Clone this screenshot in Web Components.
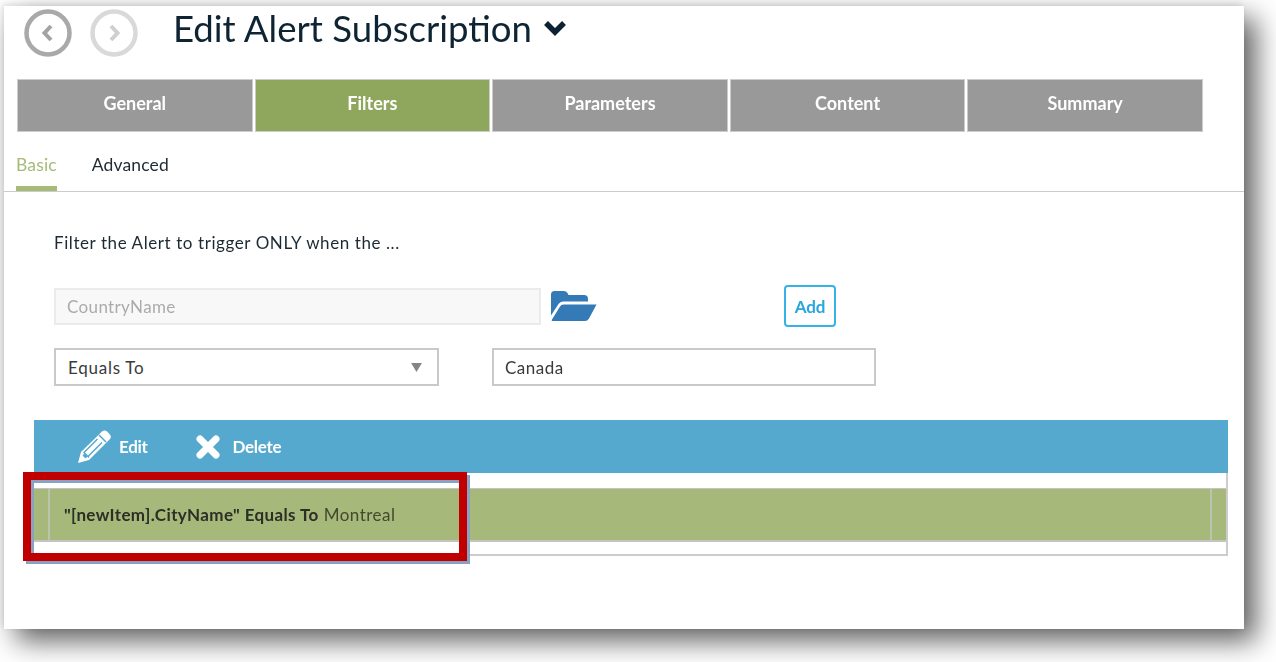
<!DOCTYPE html>
<html>
<head>
<meta charset="utf-8">
<title>Edit Alert Subscription</title>
<style>
html, body { margin: 0; height: 100%; background: #fff; overflow: hidden; }
body { padding: 6px 0 0 4px; box-sizing: border-box; font-family: "Lato", "Open Sans", sans-serif; color: #1d2a33; }
</style>
</head>
<body>
<alert-sheet>
    <alert-header title-text="Edit Alert Subscription"></alert-header>
    <step-tabs>
        <step-tab>General</step-tab>
        <step-tab active>Filters</step-tab>
        <step-tab>Parameters</step-tab>
        <step-tab>Content</step-tab>
        <step-tab>Summary</step-tab>
    </step-tabs>
    <sub-tabs></sub-tabs>
    <filter-form></filter-form>
    <filter-grid></filter-grid>
    <highlight-box></highlight-box>
</alert-sheet>

<script>
class AlertSheet extends HTMLElement {
    constructor() {
        super();
        this.attachShadow({ mode: 'open' }).innerHTML = `
<style>
:host {
    display: block;
    position: relative;
    width: 1240px;
    height: 623px;
    background: #fff;
    box-shadow: 12px 12px 26px rgba(0,0,0,.62), -2px -2px 6px rgba(0,0,0,.1);
}
</style>
<slot></slot>`;
    }
}

class AlertHeader extends HTMLElement {
    constructor() {
        super();
        this.attachShadow({ mode: 'open' }).innerHTML = `
<style>
:host { display: flex; align-items: center; height: 73px; box-sizing: border-box; padding: 0 0 19px 20px; filter: blur(.3px); }
.nav { width: 48px; height: 48px; flex: none; }
.nav + .nav { margin-left: 18px; }
h1 { margin: 0 0 10px 35px; font-size: 36.600px; font-weight: 400; color: #0f2433; white-space: nowrap; }
.chev { margin: 0 0 10px 11px; width: 24px; height: 16px; flex: none; }
</style>
<svg class="nav" viewBox="0 0 48 48"><circle cx="24" cy="24" r="21.500" fill="#fff" stroke="#a9a9a9" stroke-width="4.500"/><path d="M27 17l-6.500 7 6.500 7" fill="none" stroke="#a3a3a3" stroke-width="4"/></svg>
<svg class="nav" viewBox="0 0 48 48"><circle cx="24" cy="24" r="21.500" fill="#fff" stroke="#d9d9d9" stroke-width="4.500"/><path d="M21 17l6.500 7-6.500 7" fill="none" stroke="#cfcfcf" stroke-width="4"/></svg>
<h1></h1>
<svg class="chev" viewBox="0 0 24 16"><path d="M3 3l9 9 9-9" fill="none" stroke="#0c2233" stroke-width="5.500"/></svg>`;
        this.shadowRoot.querySelector('h1').textContent = this.getAttribute('title-text');
    }
}

class StepTabs extends HTMLElement {
    constructor() {
        super();
        this.attachShadow({ mode: 'open' }).innerHTML = `
<style>
:host { display: flex; gap: 2px; margin-left: 13px; width: 1186px; }
</style>
<slot></slot>`;
    }
}

class StepTab extends HTMLElement {
    constructor() {
        super();
        this.attachShadow({ mode: 'open' }).innerHTML = `
<style>
:host {
    flex: 1;
    display: flex;
    align-items: center;
    justify-content: center;
    height: 53px;
    box-sizing: border-box;
    padding-bottom: 6px;
    border: 1px solid #ccc;
    background: #999;
    color: #fff;
    font-size: 18px;
    font-weight: 700;
    filter: blur(.3px);
}
:host([active]) { background: #8fa75c; }
</style>
<slot></slot>`;
    }
}

class SubTabs extends HTMLElement {
    constructor() {
        super();
        this.attachShadow({ mode: 'open' }).innerHTML = `
<style>
:host { display: flex; gap: 35px; height: 60px; box-sizing: border-box; padding-left: 12px; border-bottom: 1px solid #ccc; font-size: 17.500px; filter: blur(.3px); }
span { height: 54px; line-height: 66px; letter-spacing: .15px; }
.on { color: #a6bb78; border-bottom: 5px solid #a6bb78; }
</style>
<span class="on">Basic</span><span>Advanced</span>`;
    }
}

class FilterForm extends HTMLElement {
    constructor() {
        super();
        this.attachShadow({ mode: 'open' }).innerHTML = `
<style>
:host { display: block; padding: 41px 0 0 50px; font-size: 17px; filter: blur(.3px); }
p { margin: 0; height: 20px; line-height: 20px; letter-spacing: .58px; }
.row { display: flex; align-items: center; }
.first { margin-top: 32px; height: 42px; }
.second { margin-top: 21px; }
.field { box-sizing: border-box; display: flex; align-items: center; background: #fff; color: #3a3a3a; border: 2px solid #c9c9c9; height: 38px; padding-left: 12px; }
.name { width: 487px; height: 37px; background: #f8f8f8; border: 2px solid #ebebeb; color: #ababab; letter-spacing: .36px; padding-left: 11px; }
.folder { margin-left: 10px; width: 46px; height: 32px; flex: none; }
.add { margin-left: 187px; width: 52px; height: 42px; box-sizing: border-box; border: 2px solid #35b2e6; border-radius: 4px; color: #27a6df; font-weight: 700; display: flex; align-items: center; justify-content: center; letter-spacing: -.1px; }
.select { width: 385px; position: relative; letter-spacing: .75px; }
.select svg { position: absolute; right: 15px; top: 13px; }
.value { width: 384px; margin-left: 53px; letter-spacing: .5px; padding-left: 11px; }
</style>
<p>Filter the Alert to trigger ONLY when the ...</p>
<div class="row first">
    <div class="field name">CountryName</div>
    <svg class="folder" viewBox="0 0 46 32"><path fill="#337ab7" d="M0 4.500Q0 1 3.500 1h9q3 0 4 2l1 2h15.500q4 0 4 4v2.500H12q-3 0-4.500 2.500L0 25.500z"/><path fill="#337ab7" d="M12.500 14.500H45.500l-7.500 14q-1.500 2.500-4 2.500H1.500q-1.500 0-.5-1.500l8-13q1-2 3.500-2z"/></svg>
    <div class="add">Add</div>
</div>
<div class="row second">
    <div class="field select">Equals To<svg width="11" height="9" viewBox="0 0 12 10"><path d="M0 0h12l-6 10z" fill="#858585"/></svg></div>
    <div class="field value">Canada</div>
</div>`;
    }
}

class FilterGrid extends HTMLElement {
    constructor() {
        super();
        this.attachShadow({ mode: 'open' }).innerHTML = `
<style>
:host { display: block; margin: 34px 0 0 30px; width: 1194px; font-size: 17px; filter: blur(.3px); }
.bar { display: flex; align-items: center; height: 53px; background: #55a8ce; color: #fff; font-weight: 700; letter-spacing: -.3px; padding-left: 44px; box-sizing: border-box; }
.bar svg { flex: none; }
.bar span { margin-left: 8px; }
.del { margin-left: 48px; }
.bar span.x { margin-left: 13px; }
.body { box-sizing: border-box; height: 83px; padding-top: 15px; border: solid #ccc; border-width: 0 2px 2px 0; }
.row { display: grid; grid-template-columns: 14px 1fr 14px; height: 54px; background: #a6b87a; border: solid #c4c4c4; border-width: 1px 0 2px; box-sizing: border-box; color: #2b2f25; }
.cell { display: flex; align-items: center; padding-left: 14px; border-left: 2px solid #bdc4ae; border-right: 2px solid #bdc4ae; }
b { font-weight: 700; letter-spacing: .38px; white-space: pre; }
.val { color: #43492f; font-weight: 400; margin-left: 5px; letter-spacing: .5px; }
</style>
<div class="bar">
    <svg width="33" height="33" viewBox="0 0 33 33"><path fill="#fff" d="M24 1.500q2.500-2 5 0l2.500 2.500q2.500 2.500.5 5L11 30 0 33l3-11z"/><path fill="none" stroke="#55a8ce" stroke-width="1.500" d="M21 5l7 7M19.500 9L6 22.500M24 12.500L10.500 26M5.500 22l5.500 5.500"/><path fill="#55a8ce" d="M6.500 23.500l3 3-2 2-3-3z"/></svg>
    <span>Edit</span>
    <svg class="del" width="24" height="24" viewBox="0 0 24 24"><path d="M4 4l16 16M20 4L4 20" fill="none" stroke="#fff" stroke-width="7" stroke-linecap="round"/></svg>
    <span class="x">Delete</span>
</div>
<div class="body">
    <div class="row">
        <div></div>
        <div class="cell"><b>"[newItem].CityName" Equals To</b><span class="val">Montreal</span></div>
        <div></div>
    </div>
</div>`;
    }
}

class HighlightBox extends HTMLElement {
    constructor() {
        super();
        this.attachShadow({ mode: 'open' }).innerHTML = `
<style>
:host {
    position: absolute;
    left: 19px;
    top: 466px;
    width: 444px;
    height: 89px;
    box-sizing: border-box;
    border: 8px solid #c00000;
    box-shadow: 3px 3px 0 #8aa2c2, inset 3px 3px 0 #8aa2c2;
}
</style>`;
    }
}

customElements.define('alert-sheet', AlertSheet);
customElements.define('alert-header', AlertHeader);
customElements.define('step-tabs', StepTabs);
customElements.define('step-tab', StepTab);
customElements.define('sub-tabs', SubTabs);
customElements.define('filter-form', FilterForm);
customElements.define('filter-grid', FilterGrid);
customElements.define('highlight-box', HighlightBox);
</script>
</body>
</html>
